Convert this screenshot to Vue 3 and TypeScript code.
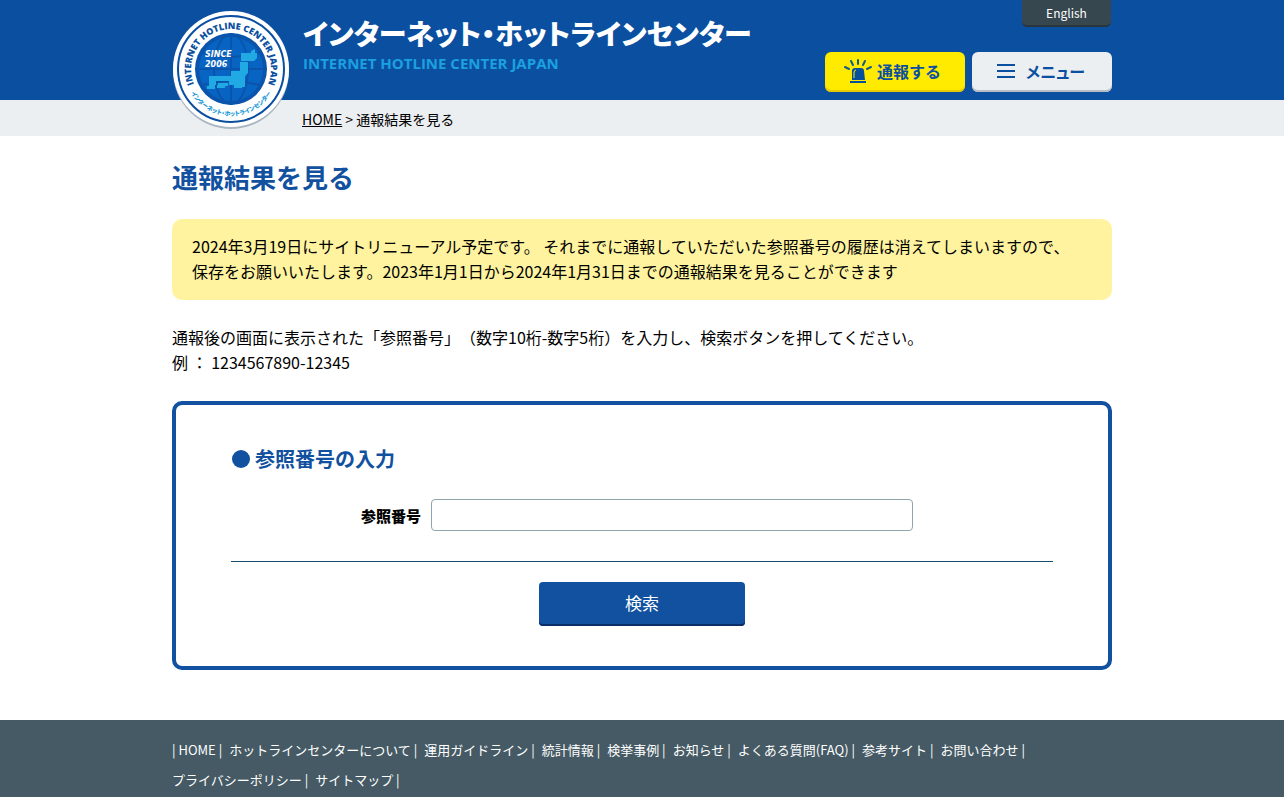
<script setup lang="ts">
import { ref } from 'vue'

const referenceNumber = ref('')
const menuOpen = ref(false)

const footerLinks: string[] = [
  'HOME',
  'ホットラインセンターについて',
  '運用ガイドライン',
  '統計情報',
  '検挙事例',
  'お知らせ',
  'よくある質問(FAQ)',
  '参考サイト',
  'お問い合わせ',
  'プライバシーポリシー',
  'サイトマップ',
]
</script>

<template>
  <div class="page">
    <header class="header">
      <div class="container header-inner">
        <a class="brand" href="#" aria-label="インターネット・ホットラインセンター">
          <svg class="emblem" viewBox="0 0 120 120" aria-hidden="true">
            <defs>
              <path id="arc-top" d="M23.700 75.900A40 40 0 1 1 96.300 75.900" />
              <path id="arc-bottom" d="M13.700 67A47 47 0 0 0 106.300 67" />
              <clipPath id="globe"><circle cx="60" cy="59" r="36" /></clipPath>
            </defs>
            <circle cx="60" cy="61" r="58" fill="#a9b6c2" />
            <circle cx="60" cy="59" r="58" fill="#fff" />
            <circle cx="60" cy="59" r="53" fill="none" stroke="#0b4fa0" stroke-width="2" />
            <circle cx="60" cy="59" r="36" fill="#0b54ac" />
            <g clip-path="url(#globe)">
              <circle cx="60" cy="59" r="33" fill="#0864c2" />
              <g fill="none" stroke="#0b54ac" stroke-width="2">
                <path d="M60 22V96M24 59H96M29 42Q60 52 91 42M29 76Q60 66 91 76" />
                <ellipse cx="60" cy="59" rx="17" ry="35" />
                <circle cx="60" cy="59" r="33" />
              </g>
              <path
                fill="#20a9e3"
                d="M70 43H80V41L84 39V43H86V48L83 51H70ZM69 52H77V63L74 66V77H71V78H63V75H58V71H45V75H44V79H36V76H38V66H60V61H69ZM47 73H57V76H54V78H46V75H47Z"
              />
            </g>
            <text class="since" x="34" y="47">SINCE</text>
            <text class="since" x="34" y="57">2006</text>
            <text class="ring-en" text-anchor="middle">
              <textPath href="#arc-top" startOffset="50%">INTERNET HOTLINE CENTER JAPAN</textPath>
            </text>
            <text class="ring-ja" text-anchor="middle">
              <textPath href="#arc-bottom" startOffset="50%">インターネット・ホットラインセンター</textPath>
            </text>
          </svg>
          <span class="brand-text">
            <span class="brand-ja">インターネット・ホットラインセンター</span>
            <span class="brand-en">INTERNET HOTLINE CENTER JAPAN</span>
          </span>
        </a>
        <div class="header-side">
          <a class="lang" href="#">English</a>
          <div class="actions">
            <a class="action action-report" href="#">
              <svg class="siren" viewBox="0 0 30 26" aria-hidden="true">
                <g fill="none" stroke="#175a89" stroke-width="2" stroke-linecap="round">
                  <path d="M15 2v4M8 3l2 4M22 3l-2 4M2 9l4 2M28 9l-4 2" />
                </g>
                <path fill="#07509b" d="M9 22V13q0-3 3-3h6q3 0 3 3l1 9zM7 23h16v2H7z" />
                <path fill="none" stroke="#ffeb00" d="M11 20v-5q0-3 2-3" />
              </svg>
              <span>通報する</span>
            </a>
            <button class="action action-menu" type="button" :aria-expanded="menuOpen" @click="menuOpen = !menuOpen">
              <svg class="bars" viewBox="0 0 18 14" aria-hidden="true">
                <path fill="#0b4fa0" d="M0 0h18v2H0zM0 6h18v2H0zM0 12h18v2H0z" />
              </svg>
              <span>メニュー</span>
            </button>
          </div>
        </div>
      </div>
    </header>

    <nav class="breadcrumb" aria-label="パンくず">
      <div class="container breadcrumb-inner"><a href="#">HOME</a> &gt; 通報結果を見る</div>
    </nav>

    <main class="container main">
      <h1>通報結果を見る</h1>
      <p class="notice">
        2024年3月19日にサイトリニューアル予定です。 それまでに通報していただいた参照番号の履歴は消えてしまいますので、<br />保存をお願いいたします。2023年1月1日から2024年1月31日までの通報結果を見ることができます
      </p>
      <p class="lead">
        通報後の画面に表示された「参照番号」（数字10桁-数字5桁）を入力し、検索ボタンを押してください。<br />例 ： 1234567890-12345
      </p>
      <form class="search" @submit.prevent>
        <h2>参照番号の入力</h2>
        <div class="field">
          <label for="reference">参照番号</label>
          <input id="reference" v-model="referenceNumber" type="text" />
        </div>
        <button class="submit" type="submit">検索</button>
      </form>
    </main>

    <footer class="footer">
      <ul class="container footer-links">
        <li v-for="link in footerLinks" :key="link"><a href="#">{{ link }}</a></li>
      </ul>
    </footer>
  </div>
</template>

<style>
body {
  margin: 0;
}
</style>

<style scoped>
.page {
  display: flex;
  flex-direction: column;
  min-height: 100vh;
  color: #000;
  background: #fff;
  font-family: 'Noto Sans CJK JP', sans-serif;
  font-size: 16px;
  line-height: 25px;
  text-spacing-trim: space-all;
}
.container {
  box-sizing: border-box;
  width: 100%;
  max-width: 940px;
  margin: 0 auto;
}
.header {
  background: #0b4fa0;
}
.header-inner {
  display: flex;
  justify-content: space-between;
  height: 100px;
}
.brand {
  display: flex;
  align-items: flex-start;
  gap: 12px;
  text-decoration: none;
}
.emblem {
  position: relative;
  z-index: 1;
  flex: none;
  width: 120px;
  height: 120px;
  margin: 10px 0 0 -1px;
}
.since {
  fill: #fff;
  font: italic 700 8px 'DejaVu Sans', sans-serif;
}
.ring-en {
  fill: #0b4fa0;
  font: 800 9px 'Open Sans', sans-serif;
}
.ring-ja {
  fill: #1b9ad8;
  font: 900 6px 'Noto Sans CJK JP', sans-serif;
  font-feature-settings: 'palt';
}
.brand-text {
  display: flex;
  flex-direction: column;
  padding-top: 13px;
  white-space: nowrap;
}
.brand-ja {
  color: #fff;
  font-size: 28px;
  font-weight: 900;
  line-height: 40px;
  font-feature-settings: 'palt';
}
.brand-en {
  color: #1ba0e0;
  font-family: 'Open Sans', sans-serif;
  font-size: 15px;
  font-weight: 700;
  line-height: 20px;
}
.header-side {
  display: flex;
  flex-direction: column;
  align-items: flex-end;
}
.lang {
  box-sizing: border-box;
  width: 89px;
  height: 27px;
  margin-right: 1px;
  border-bottom: 2px solid #29353a;
  border-radius: 0 0 5px 5px;
  color: #fff;
  background: #37474f;
  font-size: 12px;
  line-height: 26px;
  text-align: center;
  text-decoration: none;
}
.actions {
  display: flex;
  gap: 7px;
  margin-top: 25px;
}
.action {
  box-sizing: border-box;
  display: flex;
  align-items: center;
  justify-content: center;
  width: 140px;
  height: 40px;
  padding: 0 2px 2px 0;
  border: 0;
  border-radius: 6px;
  color: #0b4fa0;
  font-family: inherit;
  font-size: 16px;
  font-weight: 700;
  text-decoration: none;
  cursor: pointer;
}
.action-report {
  gap: 4px;
  padding-right: 6px;
  background: #ffeb00;
  box-shadow: inset 0 -2px #e6c800;
}
.action-menu {
  gap: 11px;
  background: #eceff1;
  box-shadow: inset 0 -2px #b8bfc4;
  font-feature-settings: 'palt';
}
.siren {
  width: 30px;
  height: 26px;
}
.bars {
  width: 18px;
  height: 14px;
}
.breadcrumb {
  background: #eceff1;
  font-size: 14px;
  line-height: 38px;
}
.breadcrumb-inner {
  height: 36px;
  padding-left: 130px;
}
.breadcrumb a {
  color: #000;
}
.main {
  flex: 1;
  padding: 24px 0 50px;
}
h1 {
  margin: 0;
  color: #1151a0;
  font-size: 26px;
  font-weight: 700;
  line-height: 34px;
}
.notice {
  margin: 25px 0 0;
  padding: 15px 20px 16px;
  border-radius: 10px;
  background: #fff3a0;
}
.lead {
  margin: 25px 0 26px;
}
.search {
  padding: 37px 55px 40px;
  border: 4px solid #1151a0;
  border-radius: 10px;
}
h2 {
  display: flex;
  align-items: center;
  gap: 5px;
  margin: 0;
  color: #1151a0;
  font-size: 20px;
  font-weight: 700;
  line-height: 34px;
}
h2::before {
  width: 18px;
  height: 18px;
  margin-left: 1px;
  border-radius: 50%;
  background: #1151a0;
  content: '';
}
.field {
  display: flex;
  align-items: center;
  justify-content: center;
  gap: 10px;
  padding: 23px 10px 30px 0;
  border-bottom: 1px solid #174e6e;
}
label {
  font-size: 15px;
  font-weight: 900;
}
input {
  box-sizing: border-box;
  width: 482px;
  height: 32px;
  padding: 4px 8px;
  border: 1px solid #90a4ae;
  border-radius: 4px;
  font: inherit;
}
.submit {
  display: block;
  width: 206px;
  height: 44px;
  margin: 20px auto 0;
  padding: 0 0 4px;
  border: 0;
  border-radius: 4px;
  color: #fff;
  background: #1151a0;
  box-shadow: inset 0 -2px #0a2f66;
  font-family: inherit;
  font-size: 17px;
  cursor: pointer;
}
.footer {
  color: #fff;
  background: #455a64;
  font-size: 13px;
  line-height: 30px;
}
.footer-links {
  display: flex;
  flex-wrap: wrap;
  column-gap: 7px;
  padding: 15px 80px 2px 0;
  list-style: none;
}
.footer-links a {
  color: #fff;
  text-decoration: none;
}
.footer-links li:first-child::before {
  content: '| ';
}
.footer-links li::after {
  content: ' |';
}
</style>
